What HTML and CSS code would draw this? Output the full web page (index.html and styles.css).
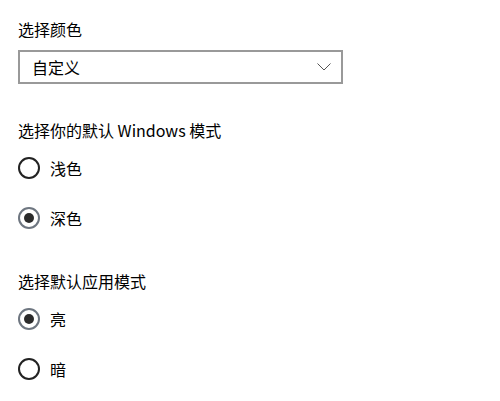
FILE: index.html
```html
<!DOCTYPE html>
<html lang="zh-CN">
<head>
    <meta charset="UTF-8">
    <title>颜色</title>
    <link rel="stylesheet" href="styles.css">
</head>
<body>

<div class="page">
    <div class="label">选择颜色</div>
    <div class="dropdown">
        <span>自定义</span>
        <svg class="chevron" width="14" height="8" viewBox="0 0 14 8">
            <path d="M0.5 0.5 L7 7 L13.5 0.5" fill="none" stroke="#555" stroke-width="1"/>
        </svg>
    </div>

    <div class="section">
        <div class="label">选择你的默认 Windows 模式</div>
        <div class="radios">
            <div class="radio"><span class="dot"></span>浅色</div>
            <div class="radio checked"><span class="dot"></span>深色</div>
        </div>
    </div>

    <div class="section">
        <div class="label">选择默认应用模式</div>
        <div class="radios">
            <div class="radio checked"><span class="dot"></span>亮</div>
            <div class="radio"><span class="dot"></span>暗</div>
        </div>
    </div>
</div>

</body>
</html>
```

FILE: styles.css
```css
body {
    margin: 0;
    background: #fff;
    color: #000;
    font-family: "Noto Sans CJK SC", "Noto Sans", sans-serif;
}

.page {
    padding: 19px 0 0 18px;
}

.label {
    font-size: 16px;
    line-height: 20px;
    height: 20px;
}

.dropdown {
    margin-top: 11px;
    width: 325px;
    height: 34px;
    box-sizing: border-box;
    border: 2px solid #999;
    display: flex;
    align-items: center;
    justify-content: space-between;
    padding: 0 10px 0 12px;
    font-size: 16px;
}

.section {
    margin-top: 36px;
}

.section + .section {
    margin-top: 42px;
}

.radios {
    margin-top: 17px;
    display: flex;
    flex-direction: column;
    gap: 28px;
}

.radio {
    display: flex;
    align-items: center;
    height: 22px;
    font-size: 16px;
}

.dot {
    width: 22px;
    height: 22px;
    box-sizing: border-box;
    border: 2px solid #222;
    border-radius: 50%;
    margin-right: 10px;
    display: flex;
    align-items: center;
    justify-content: center;
}

.radio.checked .dot {
    border-color: #6e7680;
}

.radio.checked .dot::after {
    content: "";
    width: 10px;
    height: 10px;
    border-radius: 50%;
    background: #2b2b2b;
}
```
